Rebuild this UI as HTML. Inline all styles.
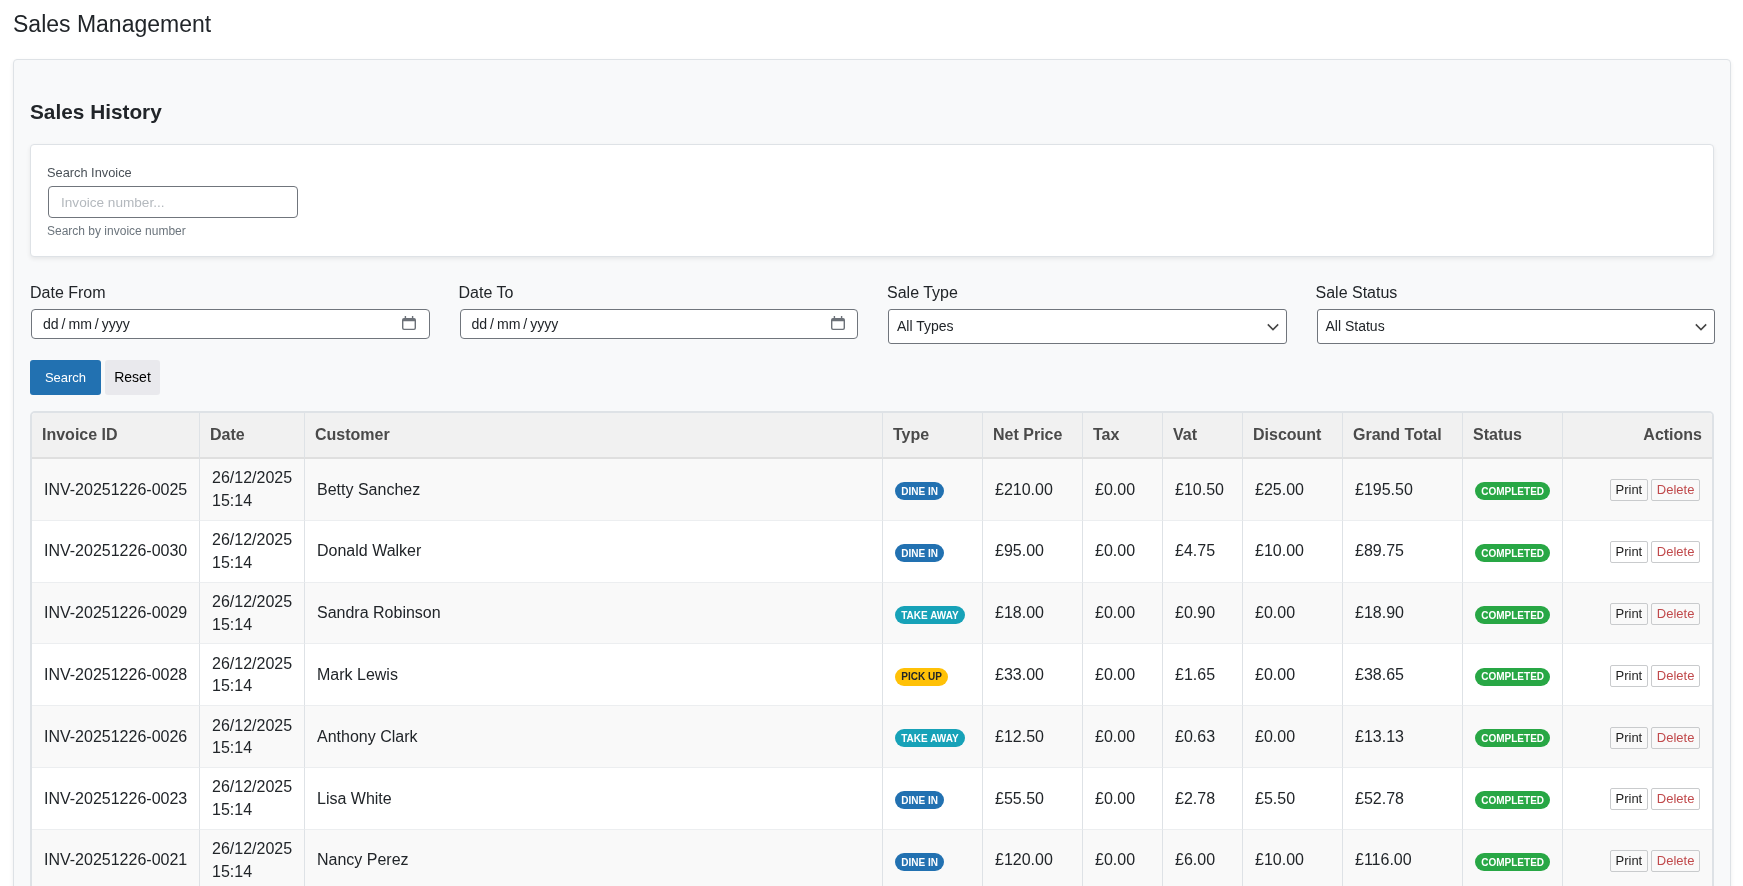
<!DOCTYPE html>
<html lang="en">
<head>
<meta charset="utf-8">
<title>Sales Management</title>
<style>
*{box-sizing:border-box;}
html,body{margin:0;padding:0;}
body{width:1743px;height:886px;overflow:hidden;background:#fff;font-family:"Liberation Sans",Arial,sans-serif;color:#212529;font-size:16px;line-height:1.4;position:relative;}
#root{position:absolute;left:0;top:0;width:1743px;height:886px;overflow:hidden;will-change:transform;}
h1{position:absolute;left:13px;top:9px;margin:0;font-size:23px;font-weight:400;line-height:30px;color:#212529;}
.card{position:absolute;left:13px;top:59px;width:1718px;height:900px;background:#f8f9fa;border:1px solid #dee2e6;border-radius:4px;box-shadow:0 2px 4px rgba(0,0,0,.075);}
h2{position:absolute;left:30px;top:97px;margin:0;font-size:20.8px;font-weight:700;line-height:30px;color:#212529;}
.sbox{position:absolute;left:30px;top:144px;width:1684px;height:113px;background:#fff;border:1px solid #dee2e6;border-radius:4px;box-shadow:0 2px 4px rgba(0,0,0,.075);}
.sbox label{position:absolute;left:16px;top:19px;font-size:12.8px;line-height:18px;color:#495057;}
.sbox .inp{position:absolute;left:17px;top:41px;width:250px;height:32px;border:1px solid #70757c;border-radius:4px;background:#fff;font-size:13.6px;line-height:32px;padding-left:12px;color:#b4b9be;}
.sbox small{position:absolute;left:16px;top:77px;font-size:12px;line-height:18px;color:#6c757d;}
.flabel{position:absolute;top:282px;font-size:16px;line-height:22px;color:#212529;}
.date{position:absolute;top:309px;width:398.5px;height:30px;border:1px solid #70757c;border-radius:4px;background:#fff;font-size:14.1px;line-height:28px;padding-left:11px;color:#212529;word-spacing:-1px;}
.date svg{position:absolute;right:12.5px;top:6px;}
.sel{position:absolute;top:309px;width:398.5px;height:35px;border:1px solid #70757c;border-radius:3px;background:#fff;font-size:14px;line-height:33px;padding-left:8px;color:#212529;}
.sel svg{position:absolute;right:7px;top:10.8px;}
.btn{position:absolute;top:360px;height:35px;border-radius:3px;font-size:13px;line-height:35px;text-align:center;}
.b1{left:30px;width:71px;background:#2271b1;color:#fff;}
.b2{left:105px;width:55px;background:#e9e9ed;color:#000;font-size:14px;}
.twrap{position:absolute;left:30px;top:411px;width:1684px;height:600px;border:2px solid #dee2e6;border-radius:5px;background:#fff;overflow:hidden;}
table{border-collapse:separate;border-spacing:0;table-layout:fixed;width:1680px;}
th{height:46px;background:#f1f1f1;color:#4a4a4a;font-weight:700;font-size:16px;text-align:left;padding:0 10px;border-right:1px solid #dee2e6;border-bottom:2px solid #dfdfdf;}
td{height:61.8px;padding:1.2px 12px 0;border-right:1px solid #dee2e6;border-bottom:1px solid #eceef0;font-size:16px;line-height:22.6px;color:#212529;vertical-align:middle;}
tr:nth-child(odd) td{background:#f9f9f9;}
td:first-child{white-space:nowrap;}
th:last-child,td:last-child{border-right:0;text-align:right;}
.bd{display:inline-block;font-size:10px;font-weight:700;line-height:18px;height:18px;padding:0.8px 6.25px 0;border-radius:9px;color:#fff;vertical-align:middle;position:relative;top:0.85px;}
.di{background:#2271b1;}.ta{background:#17a2b8;}.pu{background:#ffc107;color:#212529;}.co{background:#28a745;}
.ab{display:inline-block;font-size:13px;line-height:20px;height:22px;padding:0 5px;border:1px solid #c9cbcd;border-radius:2px;background:transparent;color:#1f1f1f;vertical-align:middle;}
.ab.del{color:#c0494b;margin-left:3px;padding:0 4.6px;}
</style>
</head>
<body>
<div id="root">
<h1>Sales Management</h1>
<div class="card"></div>
<h2>Sales History</h2>
<div class="sbox">
<label>Search Invoice</label>
<div class="inp">Invoice number...</div>
<small>Search by invoice number</small>
</div>
<div class="flabel" style="left:30px">Date From</div>
<div class="flabel" style="left:458.5px">Date To</div>
<div class="flabel" style="left:887px">Sale Type</div>
<div class="flabel" style="left:1315.5px">Sale Status</div>
<div class="date" style="left:31px">dd / mm / yyyy<svg width="14" height="14" viewBox="0 0 14 14"><path fill="#6c7178" fill-rule="evenodd" d="M2.7 0h1.4v2h5.8V0h1.4v2H12a2 2 0 0 1 2 2v8a2 2 0 0 1-2 2H2a2 2 0 0 1-2-2V4a2 2 0 0 1 2-2h.7zM1.4 5.2V12a.7.7 0 0 0 .7.7h9.8a.7.7 0 0 0 .7-.7V5.2z"/></svg></div>
<div class="date" style="left:459.5px">dd / mm / yyyy<svg width="14" height="14" viewBox="0 0 14 14"><path fill="#6c7178" fill-rule="evenodd" d="M2.7 0h1.4v2h5.8V0h1.4v2H12a2 2 0 0 1 2 2v8a2 2 0 0 1-2 2H2a2 2 0 0 1-2-2V4a2 2 0 0 1 2-2h.7zM1.4 5.2V12a.7.7 0 0 0 .7.7h9.8a.7.7 0 0 0 .7-.7V5.2z"/></svg></div>
<div class="sel" style="left:888px">All Types<svg width="12" height="12" viewBox="0 0 12 12"><path d="M0.8 3.4 L6 8.6 L11.2 3.4" fill="none" stroke="#444" stroke-width="1.5"/></svg></div>
<div class="sel" style="left:1316.5px">All Status<svg width="12" height="12" viewBox="0 0 12 12"><path d="M0.8 3.4 L6 8.6 L11.2 3.4" fill="none" stroke="#444" stroke-width="1.5"/></svg></div>
<div class="btn b1">Search</div>
<div class="btn b2">Reset</div>
<div class="twrap">
<table>
<colgroup><col style="width:168px"><col style="width:105px"><col style="width:578px"><col style="width:100px"><col style="width:100px"><col style="width:80px"><col style="width:80px"><col style="width:100px"><col style="width:120px"><col style="width:100px"><col style="width:149px"></colgroup>
<thead><tr><th>Invoice ID</th><th>Date</th><th>Customer</th><th>Type</th><th>Net Price</th><th>Tax</th><th>Vat</th><th>Discount</th><th>Grand Total</th><th>Status</th><th>Actions</th></tr></thead>
<tbody>
<tr><td>INV-20251226-0025</td><td>26/12/2025 15:14</td><td>Betty Sanchez</td><td><span class="bd di">DINE IN</span></td><td>£210.00</td><td>£0.00</td><td>£10.50</td><td>£25.00</td><td>£195.50</td><td><span class="bd co">COMPLETED</span></td><td><span class="ab">Print</span><span class="ab del">Delete</span></td></tr>
<tr><td>INV-20251226-0030</td><td>26/12/2025 15:14</td><td>Donald Walker</td><td><span class="bd di">DINE IN</span></td><td>£95.00</td><td>£0.00</td><td>£4.75</td><td>£10.00</td><td>£89.75</td><td><span class="bd co">COMPLETED</span></td><td><span class="ab">Print</span><span class="ab del">Delete</span></td></tr>
<tr><td>INV-20251226-0029</td><td>26/12/2025 15:14</td><td>Sandra Robinson</td><td><span class="bd ta">TAKE AWAY</span></td><td>£18.00</td><td>£0.00</td><td>£0.90</td><td>£0.00</td><td>£18.90</td><td><span class="bd co">COMPLETED</span></td><td><span class="ab">Print</span><span class="ab del">Delete</span></td></tr>
<tr><td>INV-20251226-0028</td><td>26/12/2025 15:14</td><td>Mark Lewis</td><td><span class="bd pu">PICK UP</span></td><td>£33.00</td><td>£0.00</td><td>£1.65</td><td>£0.00</td><td>£38.65</td><td><span class="bd co">COMPLETED</span></td><td><span class="ab">Print</span><span class="ab del">Delete</span></td></tr>
<tr><td>INV-20251226-0026</td><td>26/12/2025 15:14</td><td>Anthony Clark</td><td><span class="bd ta">TAKE AWAY</span></td><td>£12.50</td><td>£0.00</td><td>£0.63</td><td>£0.00</td><td>£13.13</td><td><span class="bd co">COMPLETED</span></td><td><span class="ab">Print</span><span class="ab del">Delete</span></td></tr>
<tr><td>INV-20251226-0023</td><td>26/12/2025 15:14</td><td>Lisa White</td><td><span class="bd di">DINE IN</span></td><td>£55.50</td><td>£0.00</td><td>£2.78</td><td>£5.50</td><td>£52.78</td><td><span class="bd co">COMPLETED</span></td><td><span class="ab">Print</span><span class="ab del">Delete</span></td></tr>
<tr><td>INV-20251226-0021</td><td>26/12/2025 15:14</td><td>Nancy Perez</td><td><span class="bd di">DINE IN</span></td><td>£120.00</td><td>£0.00</td><td>£6.00</td><td>£10.00</td><td>£116.00</td><td><span class="bd co">COMPLETED</span></td><td><span class="ab">Print</span><span class="ab del">Delete</span></td></tr>
<tr><td>INV-20251226-0020</td><td>26/12/2025 15:14</td><td>Paul Young</td><td><span class="bd di">DINE IN</span></td><td>£48.00</td><td>£0.00</td><td>£2.40</td><td>£0.00</td><td>£50.40</td><td><span class="bd co">COMPLETED</span></td><td><span class="ab">Print</span><span class="ab del">Delete</span></td></tr>
</tbody>
</table>
</div>
</div>
</body>
</html>
